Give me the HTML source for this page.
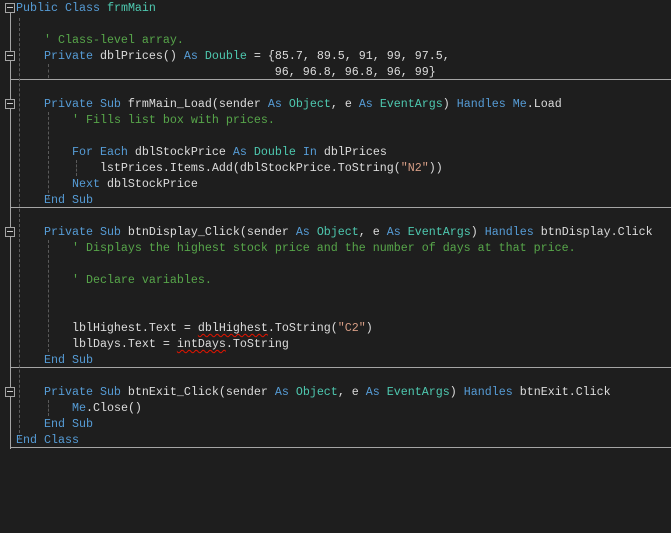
<!DOCTYPE html>
<html><head><meta charset="utf-8"><style>
body{margin:0;width:671px;height:533px;background:#1e1e1e;overflow:hidden;position:relative;font-family:"Liberation Mono",monospace;font-size:11.67px;color:#dcdcdc}
.l{position:absolute;left:16px;height:16px;line-height:16px;white-space:pre}
.k{color:#569cd6}.t{color:#4ec9b0}.c{color:#57a64a}.s{color:#d69d85}
.sq{text-decoration:underline wavy #e51400;text-decoration-thickness:1px;text-underline-offset:2px}
.h{position:absolute;left:10px;width:661px;height:1px;background:#a5a5a5}
.v{position:absolute;width:1px;background:#a5a5a5}
.d{position:absolute;width:0;border-left:1px dashed #5a5a5a}
.f{position:absolute;left:5px;width:8px;height:8px;border:1px solid #a5a5a5;background:#1e1e1e}
.f:after{content:"";position:absolute;left:1px;top:3px;width:6px;height:1px;background:#c8c8c8}
</style></head><body>
<div class="v" style="left:10px;top:12px;height:437px"></div>
<div class="h" style="top:79px"></div>
<div class="h" style="top:207px"></div>
<div class="h" style="top:367px"></div>
<div class="h" style="top:447px"></div>
<div class="d" style="left:19px;top:18px;height:420px"></div>
<div class="d" style="left:48px;top:64px;height:14px"></div>
<div class="d" style="left:48px;top:112px;height:86px"></div>
<div class="d" style="left:76px;top:160px;height:16px"></div>
<div class="d" style="left:48px;top:240px;height:112px"></div>
<div class="d" style="left:48px;top:400px;height:16px"></div>
<div class="f" style="top:3px"></div>
<div class="f" style="top:51px"></div>
<div class="f" style="top:99px"></div>
<div class="f" style="top:227px"></div>
<div class="f" style="top:387px"></div>
<div class="l" style="top:0"><span class="k">Public Class</span> <span class="t">frmMain</span></div>
<div class="l" style="top:32px">    <span class="c">' Class-level array.</span></div>
<div class="l" style="top:48px">    <span class="k">Private</span> dblPrices() <span class="k">As</span> <span class="t">Double</span> = {85.7, 89.5, 91, 99, 97.5,</div>
<div class="l" style="top:64px">                                     96, 96.8, 96.8, 96, 99}</div>
<div class="l" style="top:96px">    <span class="k">Private Sub</span> frmMain_Load(sender <span class="k">As</span> <span class="t">Object</span>, e <span class="k">As</span> <span class="t">EventArgs</span>) <span class="k">Handles</span> <span class="k">Me</span>.Load</div>
<div class="l" style="top:112px">        <span class="c">' Fills list box with prices.</span></div>
<div class="l" style="top:144px">        <span class="k">For Each</span> dblStockPrice <span class="k">As</span> <span class="t">Double</span> <span class="k">In</span> dblPrices</div>
<div class="l" style="top:160px">            lstPrices.Items.Add(dblStockPrice.ToString(<span class="s">"N2"</span>))</div>
<div class="l" style="top:176px">        <span class="k">Next</span> dblStockPrice</div>
<div class="l" style="top:192px">    <span class="k">End Sub</span></div>
<div class="l" style="top:224px">    <span class="k">Private Sub</span> btnDisplay_Click(sender <span class="k">As</span> <span class="t">Object</span>, e <span class="k">As</span> <span class="t">EventArgs</span>) <span class="k">Handles</span> btnDisplay.Click</div>
<div class="l" style="top:240px">        <span class="c">' Displays the highest stock price and the number of days at that price.</span></div>
<div class="l" style="top:272px">        <span class="c">' Declare variables.</span></div>
<div class="l" style="top:320px">        lblHighest.Text = <span class="sq">dblHighest</span>.ToString(<span class="s">"C2"</span>)</div>
<div class="l" style="top:336px">        lblDays.Text = <span class="sq">intDays</span>.ToString</div>
<div class="l" style="top:352px">    <span class="k">End Sub</span></div>
<div class="l" style="top:384px">    <span class="k">Private Sub</span> btnExit_Click(sender <span class="k">As</span> <span class="t">Object</span>, e <span class="k">As</span> <span class="t">EventArgs</span>) <span class="k">Handles</span> btnExit.Click</div>
<div class="l" style="top:400px">        <span class="k">Me</span>.Close()</div>
<div class="l" style="top:416px">    <span class="k">End Sub</span></div>
<div class="l" style="top:432px"><span class="k">End Class</span></div>
</body></html>
